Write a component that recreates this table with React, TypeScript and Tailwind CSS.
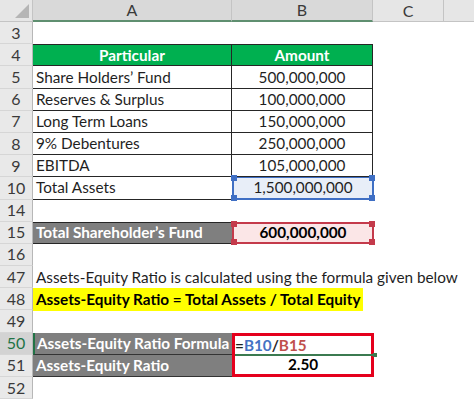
import React from "react";

const font = { fontFamily: "Lato, 'Open Sans', sans-serif" };

const RowHead = ({ n, active }: { n: string; active?: boolean }) => (
  <div
    className={
      "flex h-full w-[33px] shrink-0 items-center justify-center border-r border-b border-r-[#b7b7b7] border-b-[#d6d6d6] text-[16px] " +
      (active ? "bg-[#d3d3d3] text-[#217346]" : "bg-[#e9e9e9] text-[#3a3a3a]")
    }
  >
    {n}
  </div>
);

const Row = ({ n, active, children }: { n: string; active?: boolean; children?: React.ReactNode }) => (
  <div className="flex h-[22.2px] w-full">
    <RowHead n={n} active={active} />
    <div className="flex h-full flex-1">{children}</div>
  </div>
);

const Handles = ({ color }: { color: string }) => (
  <>
    <span className={"absolute -left-[3px] -top-[3px] h-[6px] w-[6px] " + color} />
    <span className={"absolute -right-[3px] -top-[3px] h-[6px] w-[6px] " + color} />
    <span className={"absolute -left-[3px] -bottom-[3px] h-[6px] w-[6px] " + color} />
    <span className={"absolute -right-[3px] -bottom-[3px] h-[6px] w-[6px] " + color} />
  </>
);

const items = [
  ["5", "Share Holders\u2019 Fund", "500,000,000"],
  ["6", "Reserves & Surplus", "100,000,000"],
  ["7", "Long Term Loans", "150,000,000"],
  ["8", "9% Debentures", "250,000,000"],
  ["9", "EBITDA", "105,000,000"],
];

export default function App() {
  return (
    <div className="h-[401px] w-[474px] overflow-hidden bg-white text-[15.3px] text-[#1f1f1f]" style={font}>
      {/* column headers */}
      <div className="flex h-[22px] w-full bg-[#e6e6e6] text-[16px] text-[#3a3a3a]">
        <div className="relative w-[33px] shrink-0 border-r border-b border-[#c4c4c4]">
          <svg className="absolute right-[3px] bottom-[3px]" width="14" height="14" viewBox="0 0 14 14">
            <polygon points="14,0 14,14 0,14" fill="#b5b5b5" />
          </svg>
        </div>
        <div className="flex w-[199px] items-center justify-center border-r border-b-2 border-r-[#c4c4c4] border-b-[#5f8f70] bg-[#d9d9d9]">A</div>
        <div className="flex w-[141px] items-center justify-center border-r border-b-2 border-r-[#c4c4c4] border-b-[#5f8f70] bg-[#d9d9d9]">B</div>
        <div className="flex w-[71px] items-center justify-center border-r border-b border-[#c4c4c4]">C</div>
        <div className="flex-1 border-b border-[#c4c4c4]" />
      </div>

      <Row n="3" />

      <Row n="4">
        <div className="flex w-[199px] items-center justify-center border-y border-r border-[#262626] bg-[#00b050] font-bold text-white">
          Particular
        </div>
        <div className="flex w-[141px] items-center justify-center border-y border-r border-[#262626] bg-[#00b050] font-bold text-white">
          Amount
        </div>
      </Row>

      {items.map(([n, a, b]) => (
        <Row key={n} n={n}>
          <div className="flex w-[199px] items-center border-r border-b border-[#262626] pl-[3px]">{a}</div>
          <div className="flex w-[141px] items-center justify-center border-r border-b border-[#262626]">{b}</div>
        </Row>
      ))}

      <Row n="10">
        <div className="flex w-[199px] items-center border-b border-[#262626] pl-[3px]">Total Assets</div>
        <div className="relative flex w-[142px] items-center justify-center border-2 border-t-[1px] border-[#3f6fc4] bg-[#e8eef8]">
          1,500,000,000
          <Handles color="bg-[#3f6fc4]" />
        </div>
      </Row>

      <Row n="14" />

      <Row n="15">
        <div className="flex w-[199px] items-center border-y border-[#262626] bg-[#7f7f7f] pl-[3px] font-bold text-white">
          Total Shareholder&rsquo;s Fund
        </div>
        <div className="relative flex w-[142px] items-center justify-center border-2 border-[#c43a4b] bg-[#fbe6e7] font-bold text-black">
          600,000,000
          <Handles color="bg-[#c43a4b]" />
        </div>
      </Row>

      <Row n="16" />

      <Row n="47">
        <div className="flex items-center whitespace-nowrap pl-[3px]">
          Assets-Equity Ratio is calculated using the formula given below
        </div>
      </Row>

      <Row n="48">
        <div className="flex items-center whitespace-nowrap">
          <span className="bg-[#ffff00] px-[3px] font-bold text-black">
            Assets-Equity Ratio = Total Assets / Total Equity
          </span>
        </div>
      </Row>

      <Row n="49" />

      <Row n="50" active>
        <div className="flex w-[199px] items-center whitespace-nowrap border-b border-l-2 border-b-[#333] border-l-[#217346] bg-[#7f7f7f] pl-[2px] font-bold text-white">
          Assets-Equity Ratio Formula
        </div>
        <div className="relative flex w-[142px] items-center border-x-[3px] border-t-[3px] border-[#e5001c]">
          <span className="font-bold">
            =<span className="text-[#4472c4]">B10</span>/<span className="text-[#c0504d]">B15</span>
          </span>
          <span className="absolute -bottom-[1px] left-0 right-[-3px] h-[2px] bg-[#3b7a50]" />
          <span className="absolute -bottom-[2px] -right-[6px] h-[4px] w-[4px] bg-[#3b7a50]" />
        </div>
      </Row>

      <Row n="51">
        <div className="flex w-[199px] items-center border-b border-[#333] bg-[#7f7f7f] pl-[3px] font-bold text-white">
          Assets-Equity Ratio
        </div>
        <div className="flex w-[142px] items-center justify-center border-x-[3px] border-b-[3px] border-[#e5001c] font-bold text-black">
          2.50
        </div>
      </Row>

      <Row n="52" />
    </div>
  );
}
